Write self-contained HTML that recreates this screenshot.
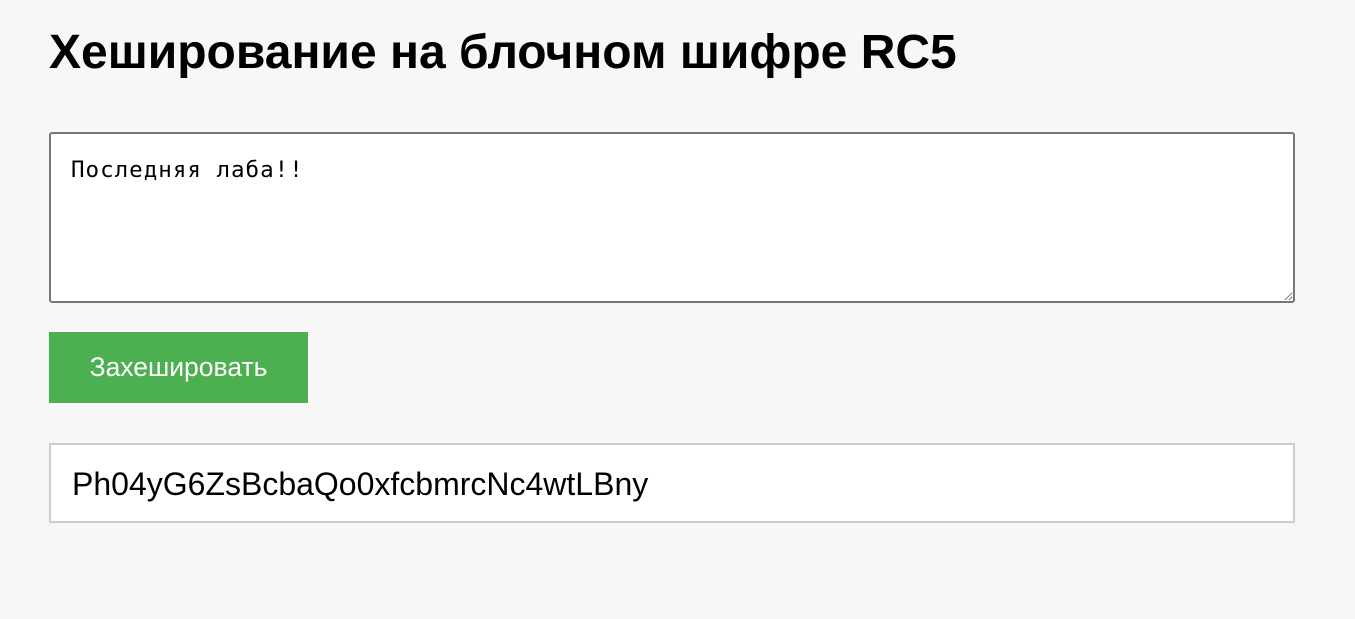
<!DOCTYPE html>
<html><head><meta charset="utf-8"><style>
body{margin:0;background:#f7f7f7;font-family:"Liberation Sans",sans-serif;width:1355px;height:619px;overflow:hidden}
h1{position:absolute;left:49px;top:25px;margin:0;font-size:48px;font-weight:bold;color:#000;line-height:56px}
textarea{position:absolute;left:49px;top:132px;width:1246px;height:171px;box-sizing:border-box;border:2px solid #767676;border-radius:3px;background:#fff;padding:24px 20px;font-family:"DejaVu Sans Mono","Liberation Mono",monospace;font-size:22.5px;letter-spacing:1px;line-height:24px;resize:vertical;margin:0;color:#000;outline:none}
.btn{position:absolute;left:49px;top:332px;width:259px;height:71px;background:#4caf50;color:#fff;font-size:26.5px;display:flex;align-items:center;justify-content:center}
.out{position:absolute;left:49px;top:443px;width:1246px;height:80px;box-sizing:border-box;border:2px solid #ccc;background:#fff;font-size:32px;padding-left:21px;line-height:78px;color:#000}
</style></head><body>
<h1>Хеширование на блочном шифре RC5</h1>
<textarea>Последняя лаба!!</textarea>
<div class="btn">Захешировать</div>
<div class="out">Ph04yG6ZsBcbaQo0xfcbmrcNc4wtLBny</div>
</body></html>
